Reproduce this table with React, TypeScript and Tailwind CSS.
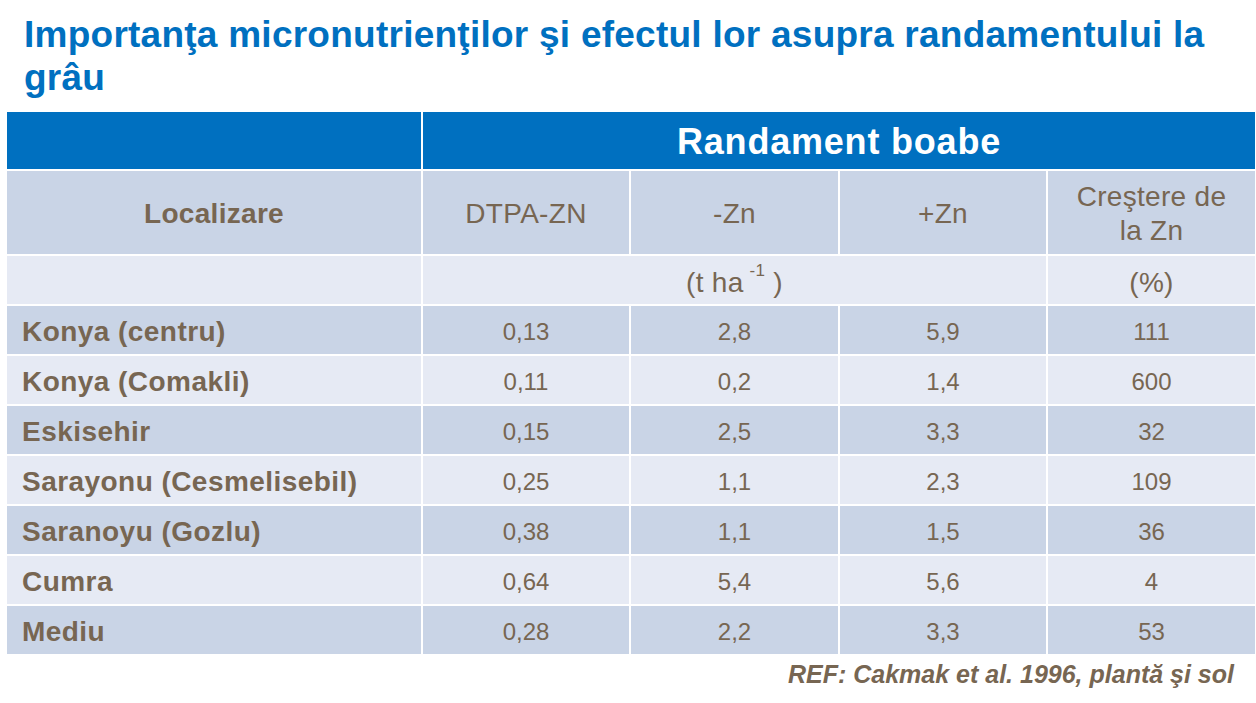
const rows = [
  { loc: 'Konya (centru)', dtpa: '0,13', minus: '2,8', plus: '5,9', inc: '111' },
  { loc: 'Konya (Comakli)', dtpa: '0,11', minus: '0,2', plus: '1,4', inc: '600' },
  { loc: 'Eskisehir', dtpa: '0,15', minus: '2,5', plus: '3,3', inc: '32' },
  { loc: 'Sarayonu (Cesmelisebil)', dtpa: '0,25', minus: '1,1', plus: '2,3', inc: '109' },
  { loc: 'Saranoyu (Gozlu)', dtpa: '0,38', minus: '1,1', plus: '1,5', inc: '36' },
  { loc: 'Cumra', dtpa: '0,64', minus: '5,4', plus: '5,6', inc: '4' },
  { loc: 'Mediu', dtpa: '0,28', minus: '2,2', plus: '3,3', inc: '53' },
];

const dark = 'bg-[#c9d4e6]';
const light = 'bg-[#e6eaf4]';

export default function App() {
  return (
    <div
      className="w-[1256px] h-[703px] bg-white overflow-hidden text-[#776652]"
      style={{ fontFamily: '"Liberation Sans", Arial, sans-serif' }}
    >
      <h1 className="pl-[24px] pt-[13px] w-[1220px] text-[37px] leading-[43px] tracking-[0.25px] font-bold text-[#0070c0]">
        Importanţa micronutrienţilor şi efectul lor asupra randamentului la grâu
      </h1>

      <div className="mt-[13px] ml-[7px] grid grid-cols-[414px_206px_207px_206px_207px] grid-rows-[57px_83px_48px_repeat(7,48px)] gap-[2px]">
        <div className="bg-[#0070c0]" />
        <div className="col-span-4 bg-[#0070c0] flex items-center justify-center pt-[3px] text-white font-bold text-[36px] tracking-[0.8px]">
          Randament boabe
        </div>

        <div className={`${dark} flex items-center justify-center pt-[2px] font-bold text-[28px] tracking-[0.3px]`}>Localizare</div>
        <div className={`${dark} flex items-center justify-center pt-[2px] text-[28px] tracking-[0.3px]`}>DTPA-ZN</div>
        <div className={`${dark} flex items-center justify-center pt-[2px] text-[28px] tracking-[0.3px]`}>-Zn</div>
        <div className={`${dark} flex items-center justify-center pt-[2px] text-[28px] tracking-[0.3px]`}>+Zn</div>
        <div className={`${dark} flex items-center justify-center pt-[2px] text-center text-[28px] leading-[34px] tracking-[0.3px]`}>
          Creştere de<br />la Zn
        </div>

        <div className={light} />
        <div className={`${light} col-span-3 flex items-center justify-center pt-[5px] text-[28px] tracking-[0.3px]`}>
          (t ha <sup className="text-[17px] ml-[6px] -top-[0.7em]">-1</sup>&nbsp;)
        </div>
        <div className={`${light} flex items-center justify-center pt-[5px] text-[28px] tracking-[0.3px]`}>(%)</div>

        {rows.map((r, i) => {
          const bg = i % 2 === 0 ? dark : light;
          return [
            <div key={`${i}a`} className={`${bg} flex items-center pl-[15px] pt-[3px] font-bold text-[28px] tracking-[0.45px]`}>{r.loc}</div>,
            <div key={`${i}b`} className={`${bg} flex items-center justify-center pt-[3px] text-[24px]`}>{r.dtpa}</div>,
            <div key={`${i}c`} className={`${bg} flex items-center justify-center pt-[3px] text-[24px]`}>{r.minus}</div>,
            <div key={`${i}d`} className={`${bg} flex items-center justify-center pt-[3px] text-[24px]`}>{r.plus}</div>,
            <div key={`${i}e`} className={`${bg} flex items-center justify-center pt-[3px] text-[24px]`}>{r.inc}</div>,
          ];
        })}
      </div>

      <div className="mt-[6px] pr-[22px] text-right italic font-bold text-[25px] leading-[28px]">
        REF: Cakmak et al. 1996, plantă şi sol
      </div>
    </div>
  );
}
